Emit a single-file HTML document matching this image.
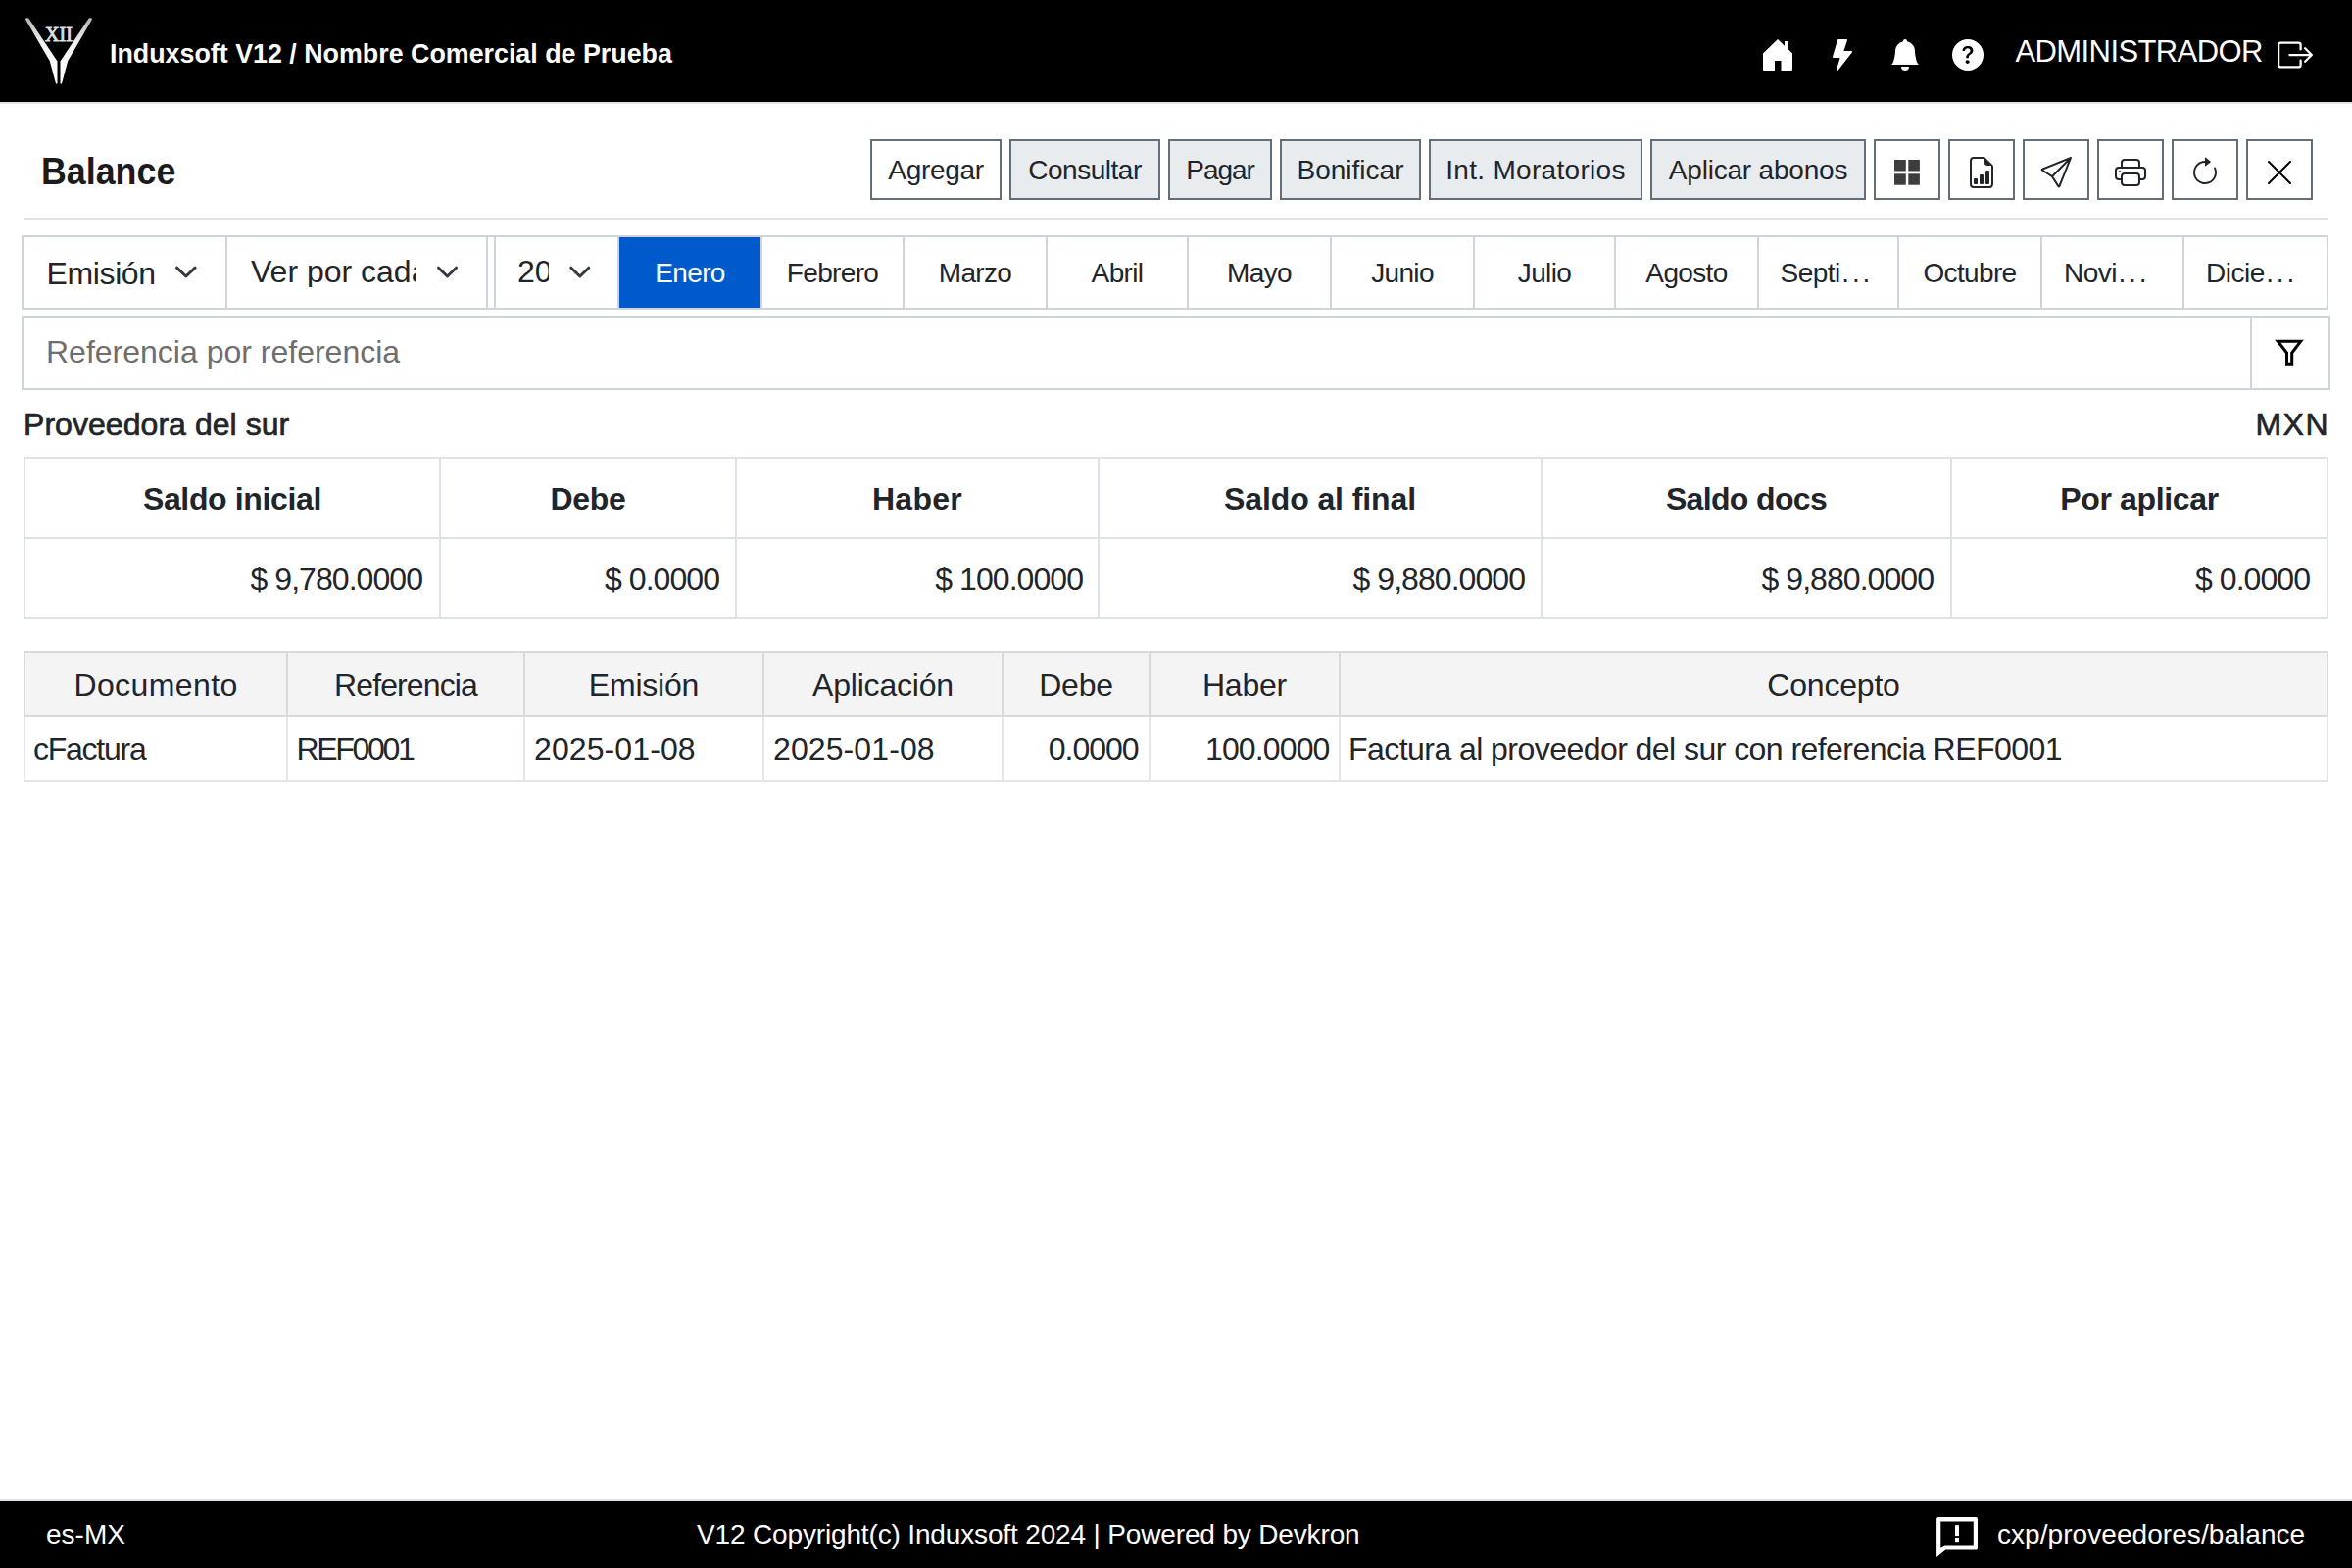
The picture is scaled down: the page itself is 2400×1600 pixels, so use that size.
<!DOCTYPE html>
<html><head><meta charset="utf-8">
<style>
html,body{margin:0;padding:0;}
@media (max-width:1800px){html{zoom:0.5;}}
body{width:2400px;height:1600px;position:relative;overflow:hidden;background:#fff;font-family:"Liberation Sans",sans-serif;color:#212529;}
.t{position:absolute;white-space:nowrap;line-height:1;}
.hdr{position:absolute;left:0;top:0;width:2400px;height:104px;background:#000;border-bottom:2px solid #dee2e6;}
.ftr{position:absolute;left:0;top:1530px;width:2400px;height:70px;background:#000;border-top:2px solid #dee2e6;}
.btn{position:absolute;top:142px;height:58px;border:2px solid #646e78;background:#e9ecef;box-sizing:content-box;}
.btn span{position:absolute;top:16px;left:0;right:0;text-align:center;font-size:28px;line-height:1;white-space:nowrap;}
.ibtn{position:absolute;top:142px;width:64px;height:58px;border:2px solid #646e78;background:#fff;}
.ibtn svg{position:absolute;left:0;top:0;overflow:visible}
.sep{position:absolute;left:24px;top:222px;width:2352px;height:2px;background:#dee2e6;}
.tabs{position:absolute;left:22px;top:240px;width:2350px;height:72px;border:2px solid #ced4da;background:#fff;}
.vd{position:absolute;top:0;width:2px;height:72px;background:#ced4da;}
.month{position:absolute;top:0;height:72px;font-size:28px;}
.month span{position:absolute;left:0;right:0;top:22.5px;text-align:center;line-height:1;letter-spacing:-0.65px;white-space:nowrap;}
.search{position:absolute;left:22px;top:322px;width:2352px;height:72px;border:2px solid #ced4da;background:#fff;}
.sh{top:493px;font-size:32px;font-weight:bold;text-align:center;letter-spacing:-0.35px;}
.sv{top:575px;font-size:32px;letter-spacing:-0.95px;}
.dh{top:683px;font-size:32px;text-align:center;letter-spacing:-0.2px;}
.dd{top:748px;font-size:32px;letter-spacing:-0.2px;}
</style></head>
<body>
<!-- HEADER -->
<div class="hdr">
  <svg style="position:absolute;left:0;top:0" width="120" height="104" viewBox="0 0 120 104">
    <defs><linearGradient id="lg" x1="0" y1="18" x2="0" y2="86" gradientUnits="userSpaceOnUse"><stop offset="0" stop-color="#b4b4b4"/><stop offset="0.4" stop-color="#f4f4f4"/><stop offset="1" stop-color="#fff"/></linearGradient></defs>
    <path d="M25.9,19.6 Q26.3,17.8 29.3,18.6 L58.5,62.5 L58.5,85.5 L57,85.5 L50.8,62.2 Z" fill="url(#lg)"/>
    <path d="M94.1,19.6 Q93.7,17.8 90.7,18.6 L61.5,62.5 L61.5,85.5 L63,85.5 L69.2,62.2 Z" fill="url(#lg)"/>
    <text x="46.1" y="41.9" textLength="27.9" lengthAdjust="spacingAndGlyphs" font-family="Liberation Serif" font-size="21.6" fill="#dedede" stroke="#dedede" stroke-width="0.9">XII</text>
  </svg>
  <div class="t" style="left:112px;top:40.8px;font-size:28px;font-weight:bold;color:#fff;transform-origin:0 0;transform:scaleX(0.958)">Induxsoft V12 / Nombre Comercial de Prueba</div>
  <!-- home -->
  <svg style="position:absolute;left:1799px;top:40px" width="30" height="32" viewBox="0 0 30 32">
    <path d="M15 0 L22 6.8 L22 2 L26 2 L26 10.6 L30 14.5 L30 31 Q30 32 29 32 L18.5 32 L18.5 22 L12 22 L12 32 L1 32 Q0 32 0 31 L0 14.5 Z" fill="#fff"/>
  </svg>
  <!-- bolt -->
  <svg style="position:absolute;left:1864px;top:40px" width="32" height="32" viewBox="0 0 16 16">
    <path d="M5.52.359A.5.5 0 0 1 6 0h4a.5.5 0 0 1 .474.658L8.694 6H12.5a.5.5 0 0 1 .395.807l-7 9a.5.5 0 0 1-.873-.454L6.823 9.5H3.5a.5.5 0 0 1-.48-.641z" fill="#fff"/>
  </svg>
  <!-- bell -->
  <svg style="position:absolute;left:1928px;top:40px" width="32" height="32" viewBox="0 0 16 16">
    <path d="M8 16a2 2 0 0 0 2-2H6a2 2 0 0 0 2 2m.995-14.901a1 1 0 1 0-1.99 0A5 5 0 0 0 3 6c0 1.098-.5 6-2 7h14c-1.5-1-2-5.902-2-7 0-2.42-1.72-4.44-4.005-4.901" fill="#fff"/>
  </svg>
  <!-- question -->
  <svg style="position:absolute;left:1992px;top:40px" width="32" height="32" viewBox="0 0 16 16">
    <path d="M16 8A8 8 0 1 1 0 8a8 8 0 0 1 16 0M5.496 6.033h.825c.138 0 .248-.113.266-.25.09-.656.54-1.134 1.342-1.134.686 0 1.314.343 1.314 1.168 0 .635-.374.927-.965 1.371-.673.489-1.206 1.06-1.168 1.987l.003.217a.25.25 0 0 0 .25.246h.811a.25.25 0 0 0 .25-.25v-.105c0-.718.273-.927 1.01-1.486.609-.463 1.244-.977 1.244-2.056 0-1.511-1.276-2.241-2.673-2.241-1.267 0-2.655.59-2.75 2.286a.237.237 0 0 0 .241.247m2.325 6.443c.61 0 1.029-.394 1.029-.927 0-.552-.42-.94-1.029-.94-.584 0-1.009.388-1.009.94 0 .533.425.927 1.01.927z" fill="#fff"/>
  </svg>
  <div class="t" style="left:2056.5px;top:37.3px;font-size:31px;color:#fff;letter-spacing:-0.6px">ADMINISTRADOR</div>
  <!-- logout -->
  <svg style="position:absolute;left:2324px;top:37.7px" width="36" height="36" viewBox="0 0 16 16">
    <path fill-rule="evenodd" d="M10 12.5a.5.5 0 0 1-.5.5h-8a.5.5 0 0 1-.5-.5v-9a.5.5 0 0 1 .5-.5h8a.5.5 0 0 1 .5.5v2a.5.5 0 0 0 1 0v-2A1.5 1.5 0 0 0 9.5 2h-8A1.5 1.5 0 0 0 0 3.5v9A1.5 1.5 0 0 0 1.5 14h8a1.5 1.5 0 0 0 1.5-1.5v-2a.5.5 0 0 0-1 0z" fill="#fff"/>
    <path fill-rule="evenodd" d="M15.854 8.354a.5.5 0 0 0 0-.708l-3-3a.5.5 0 0 0-.708.708L14.293 7.5H5.5a.5.5 0 0 0 0 1h8.793l-2.147 2.146a.5.5 0 0 0 .708.708z" fill="#fff"/>
  </svg>
</div>

<!-- TITLE + TOOLBAR -->
<div class="t" style="left:41.5px;top:155px;font-size:39px;font-weight:bold;color:#1b1b1b;transform-origin:0 0;transform:scaleX(0.918)">Balance</div>

<div class="btn" style="left:888px;width:130px;background:#fff"><span style="letter-spacing:-0.33px">Agregar</span></div>
<div class="btn" style="left:1030px;width:150px"><span style="letter-spacing:-0.46px">Consultar</span></div>
<div class="btn" style="left:1192px;width:102px"><span style="letter-spacing:-1.05px">Pagar</span></div>
<div class="btn" style="left:1306px;width:140px"><span style="letter-spacing:0px">Bonificar</span></div>
<div class="btn" style="left:1458px;width:214px"><span style="letter-spacing:0.3px">Int. Moratorios</span></div>
<div class="btn" style="left:1684px;width:216px"><span style="letter-spacing:-0.2px">Aplicar abonos</span></div>

<div class="ibtn" style="left:1912px">
  <svg width="64" height="58" viewBox="0 0 64 58"><g fill="#3d3d3d"><rect x="19" y="19" width="11.8" height="11.5"/><rect x="33.3" y="19" width="11.6" height="11.5"/><rect x="19" y="33.3" width="11.8" height="11.4"/><rect x="33.3" y="33.3" width="11.6" height="11.4"/></g></svg>
</div>
<div class="ibtn" style="left:1988px">
  <svg style="left:16px;top:16px" width="32" height="32" viewBox="0 0 16 16" fill="#212529"><path d="M10 13.5a.5.5 0 0 0 .5.5h1a.5.5 0 0 0 .5-.5v-6a.5.5 0 0 0-.5-.5h-1a.5.5 0 0 0-.5.5zm-2.5.5a.5.5 0 0 1-.5-.5v-4a.5.5 0 0 1 .5-.5h1a.5.5 0 0 1 .5.5v4a.5.5 0 0 1-.5.5zm-3 0a.5.5 0 0 1-.5-.5v-2a.5.5 0 0 1 .5-.5h1a.5.5 0 0 1 .5.5v2a.5.5 0 0 1-.5.5z"/><path d="M14 14V4.5L9.5 0H4a2 2 0 0 0-2 2v12a2 2 0 0 0 2 2h8a2 2 0 0 0 2-2M9.5 3A1.5 1.5 0 0 0 11 4.5h2V14a1 1 0 0 1-1 1H4a1 1 0 0 1-1-1V2a1 1 0 0 1 1-1h5.5z"/></svg>
</div>
<div class="ibtn" style="left:2064px">
  <svg style="left:16px;top:16px" width="32" height="32" viewBox="0 0 16 16" fill="#212529"><path d="M15.854.146a.5.5 0 0 1 .11.54l-5.819 14.547a.75.75 0 0 1-1.329.124l-3.178-4.995L.643 7.184a.75.75 0 0 1 .124-1.33L15.314.037a.5.5 0 0 1 .54.11ZM6.636 10.07l2.761 4.338L14.13 2.576zm6.787-8.201L1.591 6.602l4.339 2.76z"/></svg>
</div>
<div class="ibtn" style="left:2140px">
  <svg style="left:16px;top:16px" width="32" height="32" viewBox="0 0 16 16" fill="#212529"><path d="M2.5 8a.5.5 0 1 0 0-1 .5.5 0 0 0 0 1"/><path d="M5 1a2 2 0 0 0-2 2v2H2a2 2 0 0 0-2 2v3a2 2 0 0 0 2 2h1v1a2 2 0 0 0 2 2h6a2 2 0 0 0 2-2v-1h1a2 2 0 0 0 2-2V7a2 2 0 0 0-2-2h-1V3a2 2 0 0 0-2-2zM4 3a1 1 0 0 1 1-1h6a1 1 0 0 1 1 1v2H4zm1 5a2 2 0 0 0-2 2v1H2a1 1 0 0 1-1-1V7a1 1 0 0 1 1-1h12a1 1 0 0 1 1 1v3a1 1 0 0 1-1 1h-1v-1a2 2 0 0 0-2-2zm7 2v3a1 1 0 0 1-1 1H5a1 1 0 0 1-1-1v-3a1 1 0 0 1 1-1h6a1 1 0 0 1 1 1"/></svg>
</div>
<div class="ibtn" style="left:2216px">
  <svg style="left:16px;top:16px" width="32" height="32" viewBox="0 0 16 16" fill="#212529"><path fill-rule="evenodd" d="M8 3a5 5 0 1 0 4.546 2.914.5.5 0 0 1 .908-.417A6 6 0 1 1 8 2z"/><path d="M8 4.466V.534a.25.25 0 0 1 .41-.192l2.36 1.966c.12.1.12.284 0 .384L8.41 4.658A.25.25 0 0 1 8 4.466"/></svg>
</div>
<div class="ibtn" style="left:2292px">
  <svg style="left:16px;top:16px" width="32" height="32" viewBox="0 0 16 16" fill="#000"><path d="M2.146 2.854a.5.5 0 1 1 .708-.708L8 7.293l5.146-5.147a.5.5 0 0 1 .708.708L8.707 8l5.147 5.146a.5.5 0 0 1-.708.708L8 8.707l-5.146 5.147a.5.5 0 0 1-.708-.708L7.293 8z"/></svg>
</div>

<div class="sep"></div>

<!-- TABS -->
<div class="tabs">
  <div class="t" style="left:23.5px;top:20.5px;font-size:32px;letter-spacing:-0.37px">Emisión</div>
  <svg style="position:absolute;left:130px;top:0" width="60" height="72"><path d="M26.5 31.2 L35.8 40 L45.1 31.2" fill="none" stroke="#343a40" stroke-width="3" stroke-linecap="round" stroke-linejoin="round"/></svg>
  <div class="vd" style="left:206px"></div>
  <div class="t" style="left:232px;top:18.5px;font-size:32px;width:168px;overflow:hidden">Ver por cada</div>
  <svg style="position:absolute;left:400px;top:0" width="60" height="72"><path d="M7 31.2 L16 40 L25 31.2" transform="translate(16.5,0)" fill="none" stroke="#343a40" stroke-width="3" stroke-linecap="round" stroke-linejoin="round"/></svg>
  <div class="vd" style="left:472px"></div>
  <div class="vd" style="left:480px"></div>
  <div class="t" style="left:504px;top:18.5px;font-size:32px;width:32px;overflow:hidden">2025</div>
  <svg style="position:absolute;left:540px;top:0" width="60" height="72"><path d="M7 31.2 L16 40 L25 31.2" transform="translate(11.8,0)" fill="none" stroke="#343a40" stroke-width="3" stroke-linecap="round" stroke-linejoin="round"/></svg>
  <div class="vd" style="left:606px"></div>
  <div class="month" style="left:608px;width:144px;background:#005acc;color:#fff"><span>Enero</span></div>
  <div class="vd" style="left:752px"></div>
  <div class="month" style="left:754px;width:143px"><span>Febrero</span></div>
  <div class="vd" style="left:897px"></div>
  <div class="month" style="left:899px;width:144px"><span>Marzo</span></div>
  <div class="vd" style="left:1043px"></div>
  <div class="month" style="left:1045px;width:142px"><span>Abril</span></div>
  <div class="vd" style="left:1187px"></div>
  <div class="month" style="left:1189px;width:144px"><span>Mayo</span></div>
  <div class="vd" style="left:1333px"></div>
  <div class="month" style="left:1335px;width:144px"><span>Junio</span></div>
  <div class="vd" style="left:1479px"></div>
  <div class="month" style="left:1481px;width:142px"><span>Julio</span></div>
  <div class="vd" style="left:1623px"></div>
  <div class="month" style="left:1625px;width:144px"><span>Agosto</span></div>
  <div class="vd" style="left:1769px"></div>
  <div class="month" style="left:1771px;width:141px"><span style="left:21.5px;text-align:left;letter-spacing:-0.5px">Septi<i style="font-style:normal;letter-spacing:2.8px;margin-left:1.5px">...</i></span></div>
  <div class="vd" style="left:1912px"></div>
  <div class="month" style="left:1914px;width:144px"><span>Octubre</span></div>
  <div class="vd" style="left:2058px"></div>
  <div class="month" style="left:2060px;width:143px"><span style="left:22px;text-align:left;letter-spacing:-0.5px">Novi<i style="font-style:normal;letter-spacing:2.8px;margin-left:1.5px">...</i></span></div>
  <div class="vd" style="left:2203px"></div>
  <div class="month" style="left:2205px;width:145px"><span style="left:22px;text-align:left;letter-spacing:-0.5px">Dicie<i style="font-style:normal;letter-spacing:2.8px;margin-left:1.5px">...</i></span></div>
</div>

<!-- SEARCH -->
<div class="search">
  <div class="t" style="left:23px;top:18.5px;font-size:32px;color:#6e6e6e">Referencia por referencia</div>
  <svg style="position:absolute;left:2276px;top:0" width="78" height="72"><path d="M24.3 24.3 H47.7 L38.7 36 V47.2 H33.5 V36 Z" fill="none" stroke="#000" stroke-width="3" stroke-linejoin="miter"/></svg>
  <div class="vd" style="left:2272px"></div>
</div>

<!-- PROVIDER -->
<div class="t" style="left:24px;top:417px;font-size:32px;-webkit-text-stroke:0.7px #212529;letter-spacing:0.05px">Proveedora del sur</div>
<div class="t" style="right:23px;top:417px;font-size:32px;-webkit-text-stroke:0.7px #212529;letter-spacing:1.5px">MXN</div>

<!-- SUMMARY TABLE -->
<div style="position:absolute;left:24px;top:466px;width:2348px;height:162px;border:2px solid #dee2e6;">
  <div style="position:absolute;left:0;top:80px;width:2348px;height:2px;background:#dee2e6"></div>
  <div style="position:absolute;left:422px;top:0;width:2px;height:162px;background:#dee2e6"></div>
  <div style="position:absolute;left:724px;top:0;width:2px;height:162px;background:#dee2e6"></div>
  <div style="position:absolute;left:1094px;top:0;width:2px;height:162px;background:#dee2e6"></div>
  <div style="position:absolute;left:1546px;top:0;width:2px;height:162px;background:#dee2e6"></div>
  <div style="position:absolute;left:1964px;top:0;width:2px;height:162px;background:#dee2e6"></div>
</div>
<div class="t sh" style="left:26px;width:422px">Saldo inicial</div>
<div class="t sh" style="left:450px;width:300px">Debe</div>
<div class="t sh" style="left:752px;width:368px;letter-spacing:0.3px">Haber</div>
<div class="t sh" style="left:1122px;width:450px;letter-spacing:-0.1px">Saldo al final</div>
<div class="t sh" style="left:1574px;width:416px;letter-spacing:-0.65px">Saldo docs</div>
<div class="t sh" style="left:1992px;width:382px">Por aplicar</div>
<div class="t sv" style="right:1969px">$ 9,780.0000</div>
<div class="t sv" style="right:1666px">$ 0.0000</div>
<div class="t sv" style="right:1295px">$ 100.0000</div>
<div class="t sv" style="right:844px">$ 9,880.0000</div>
<div class="t sv" style="right:427px">$ 9,880.0000</div>
<div class="t sv" style="right:43px">$ 0.0000</div>

<!-- DETAIL TABLE -->
<div style="position:absolute;left:24px;top:664px;width:2352px;height:134px;background:#e6e6e6;"></div>
<div style="position:absolute;left:24px;top:664px;width:2352px;height:68px;background:#d9d9d9;"></div>
<div style="position:absolute;left:26px;top:666px;width:2348px;height:64px;background:#f4f4f4;"></div>
<div style="position:absolute;left:26px;top:732px;width:2348px;height:64px;background:#fff;"></div>
<div style="position:absolute;left:292px;top:666px;width:2px;height:64px;background:#d9d9d9"></div>
<div style="position:absolute;left:534px;top:666px;width:2px;height:64px;background:#d9d9d9"></div>
<div style="position:absolute;left:778px;top:666px;width:2px;height:64px;background:#d9d9d9"></div>
<div style="position:absolute;left:1022px;top:666px;width:2px;height:64px;background:#d9d9d9"></div>
<div style="position:absolute;left:1172px;top:666px;width:2px;height:64px;background:#d9d9d9"></div>
<div style="position:absolute;left:1366px;top:666px;width:2px;height:64px;background:#d9d9d9"></div>
<div style="position:absolute;left:292px;top:732px;width:2px;height:64px;background:#e6e6e6"></div>
<div style="position:absolute;left:534px;top:732px;width:2px;height:64px;background:#e6e6e6"></div>
<div style="position:absolute;left:778px;top:732px;width:2px;height:64px;background:#e6e6e6"></div>
<div style="position:absolute;left:1022px;top:732px;width:2px;height:64px;background:#e6e6e6"></div>
<div style="position:absolute;left:1172px;top:732px;width:2px;height:64px;background:#e6e6e6"></div>
<div style="position:absolute;left:1366px;top:732px;width:2px;height:64px;background:#e6e6e6"></div>
<div class="t dh" style="left:26px;width:266px;letter-spacing:0.4px">Documento</div>
<div class="t dh" style="left:294px;width:240px;letter-spacing:-0.9px">Referencia</div>
<div class="t dh" style="left:536px;width:242px">Emisión</div>
<div class="t dh" style="left:780px;width:242px">Aplicación</div>
<div class="t dh" style="left:1024px;width:148px">Debe</div>
<div class="t dh" style="left:1174px;width:192px">Haber</div>
<div class="t dh" style="left:1368px;width:1006px">Concepto</div>
<div class="t dd" style="left:34px;letter-spacing:-1.25px">cFactura</div>
<div class="t dd" style="left:302.5px;letter-spacing:-2.3px">REF0001</div>
<div class="t dd" style="left:545px;letter-spacing:0.1px">2025-01-08</div>
<div class="t dd" style="left:789px;letter-spacing:0.1px">2025-01-08</div>
<div class="t dd" style="right:1238.5px;letter-spacing:-1.04px">0.0000</div>
<div class="t dd" style="right:1043.5px;letter-spacing:-0.87px">100.0000</div>
<div class="t dd" style="left:1376px;letter-spacing:-0.55px">Factura al proveedor del sur con referencia REF0001</div>

<!-- FOOTER -->
<div class="ftr">
  <div class="t" style="left:47px;top:20px;font-size:28px;color:#fff;letter-spacing:0px">es-MX</div>
  <div class="t" style="left:711px;top:20px;font-size:28px;color:#fff;letter-spacing:-0.15px">V12 Copyright(c) Induxsoft 2024 | Powered by Devkron</div>
  <div class="t" style="left:2038px;top:20px;font-size:28px;color:#fff;letter-spacing:0.06px">cxp/proveedores/balance</div>
</div>
<svg style="position:absolute;left:1960px;top:1538px" width="70" height="60" viewBox="1960 1538 70 60">
  <path fill-rule="evenodd" fill="#fff" d="M1976.1,1550 Q1976.1,1548.1 1978,1548.1 H2016.1 Q2018,1548.1 2018,1550 V1579.7 Q2018,1581.6 2016.1,1581.6 H1985.3 L1976.1,1589.1 Z M1980.3,1552.5 H2013.8 V1577.4 H1984.5 L1980.3,1579.7 Z"/>
  <rect x="1995" y="1556.2" width="4" height="10.9" fill="#fff"/>
  <rect x="1995" y="1569" width="4" height="4.2" fill="#fff"/>
</svg>
</body></html>
